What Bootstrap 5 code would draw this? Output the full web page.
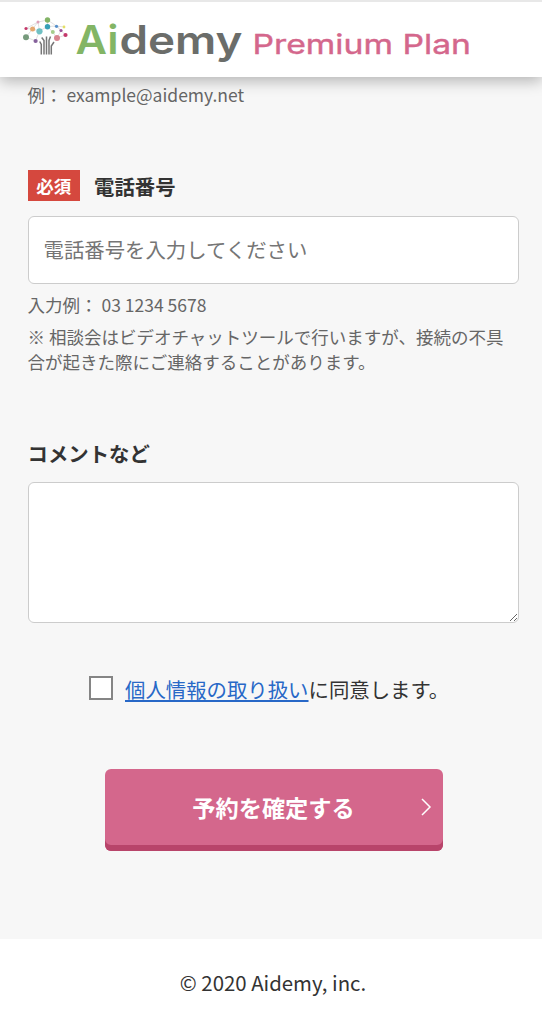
<!DOCTYPE html>
<html lang="ja">
<head>
<meta charset="utf-8">
<meta name="viewport" content="width=device-width, initial-scale=1">
<title>Aidemy Premium Plan</title>
<link href="https://cdn.jsdelivr.net/npm/bootstrap@5.3.0/dist/css/bootstrap.min.css" rel="stylesheet">
<style>
body{font-family:"Noto Sans CJK JP",sans-serif;font-size:20.4px;line-height:30px;color:#333;background:#f7f7f7;overflow:hidden}
.site-header{height:77px;border-top:2px solid #e8e8e8;box-shadow:0 4px 14px rgba(0,0,0,.28);position:relative}
.site-header svg{display:block}
.page-form{padding:5px 23.5px 0 27.5px;height:862px}
.hint{font-size:17.5px;line-height:25px;color:#666}
.required{font-size:17.5px;line-height:31px;width:52.5px;background:#d5483e;color:#fff}
.field-label{margin-left:14px}
.form-control,.form-control:focus{border:1.5px solid #ccc;border-radius:6px;background:#fff;font-size:20.4px;padding:0 15px 2px;color:#333}
.form-control::placeholder{color:#757575}
.phone{height:68px}
.comment{height:141px;resize:vertical}
.agree-check{width:24px;height:24px;border:2px solid #858585;border-radius:0!important;margin:0 0 3px;background:#fff;flex:none}
.agree-link{color:#2868c7;text-decoration-thickness:1.5px;text-underline-offset:2px}
.confirm{width:338px;height:82px;border:0;border-radius:6px;background:#d4678c;box-shadow:inset 0 -6px #b8446a;color:#fff;font-size:23.2px;font-weight:700;position:relative;padding:0 0 5px}
.confirm:hover{background:#d4678c;color:#fff}
.confirm svg{position:absolute;right:11px;top:29px}
</style>
</head>
<body>
<header class="site-header bg-white">
<svg width="542" height="74" viewBox="0 2 542 74" role="img" aria-label="Aidemy Premium Plan">
  <g fill="none" stroke="#d2d2d2" stroke-width=".7">
    <path d="M26 28.500L38 22L47.500 20L56.500 26L64 27M26 37L32.500 29L39.500 31L47.500 26.500L56.500 26L65.500 35L57 38L52.500 32L47.500 26.500V20M26 37L35.500 41L39.500 31L38 22M32.500 29L38 22M26 28.500L32.500 29M56.500 26L61 30.500L57 38"/>
  </g>
  <g fill="none" stroke="#777" stroke-width="1.500">
    <path d="M41.300 54.500V44.500L39.700 41.500M44 54.500V40.500L41.700 37.500M46.500 54.500V36.500M49 54.500V40.500L50.500 36.500M51.300 54.500V46L54 42"/>
  </g>
  <circle cx="47.500" cy="20" r="2.700" fill="#82b366"/><circle cx="38" cy="22" r="1.500" fill="#dfa0b8"/>
  <circle cx="26" cy="28.500" r="1.600" fill="#c4386a"/><circle cx="32.600" cy="29" r="2.500" fill="#e4a86f"/>
  <circle cx="47.500" cy="26.700" r="2.700" fill="#36a0b7"/><circle cx="39.500" cy="31.300" r="3.100" fill="#70c0c3"/>
  <circle cx="56.500" cy="26.300" r="1.600" fill="#5790cc"/><circle cx="64" cy="27" r="1.400" fill="#e5df67"/>
  <circle cx="61" cy="30.500" r="1.600" fill="#985199"/><circle cx="52.800" cy="32" r="2" fill="#a5cd8b"/>
  <circle cx="65.500" cy="35" r="2.100" fill="#c4386a"/><circle cx="57" cy="38" r="3" fill="#d8858f"/>
  <circle cx="26" cy="37.300" r="3" fill="#769a7c"/><circle cx="35.600" cy="41" r="2.100" fill="#85619b"/>
  <g font-family="Inter, sans-serif">
    <text x="75.500" y="54.300" font-size="40" font-weight="600" fill="#83b565" textLength="43" lengthAdjust="spacingAndGlyphs">Ai</text>
    <text x="119.500" y="54.300" font-size="39" font-weight="600" fill="#6b6d6a" textLength="123" lengthAdjust="spacingAndGlyphs">demy</text>
    <text x="252.500" y="54.300" font-size="27.500" font-weight="400" fill="#d4678c" stroke="#d4678c" stroke-width=".4" textLength="218.500" lengthAdjust="spacingAndGlyphs">Premium Plan</text>
  </g>
</svg>
</header>
<main class="page-form">
  <p class="hint mb-0">例： example@aidemy.net</p>
  <section style="padding-top:63px">
    <div class="d-flex align-items-center">
      <span class="required text-center fw-bold">必須</span>
      <label for="phone" class="fw-bold field-label">電話番号</label>
    </div>
    <input id="phone" type="tel" class="form-control phone" style="margin-top:15px" placeholder="電話番号を入力してください">
    <p class="hint mb-0" style="padding-top:8px">入力例： 03 1234 5678</p>
    <p class="hint mb-0" style="padding-top:7px">※ 相談会はビデオチャットツールで行いますが、接続の不具合が起きた際にご連絡することがあります。</p>
  </section>
  <section style="padding-top:64px">
    <label for="comment" class="fw-bold d-block">コメントなど</label>
    <textarea id="comment" class="form-control comment" style="margin-top:14px"></textarea>
  </section>
  <div class="d-flex align-items-center" style="padding:51px 0 0 61.500px">
    <input id="agree" type="checkbox" class="form-check-input agree-check">
    <label for="agree" style="margin-left:12px"><a href="#" class="agree-link">個人情報の取り扱い</a>に同意します。</label>
  </div>
  <div class="d-flex justify-content-center" style="padding:65px 0 0 1px">
    <button type="button" class="btn confirm">予約を確定する
      <svg width="12" height="18" viewBox="0 0 12 18" fill="none" stroke="#fff" stroke-width="1.500"><path d="M2 1L10 9L2 17"/></svg>
    </button>
  </div>
</main>
<footer class="bg-white text-center" style="height:85px;padding:28px 0 0 4px">© 2020 Aidemy, inc.</footer>
<script src="https://cdn.jsdelivr.net/npm/bootstrap@5.3.0/dist/js/bootstrap.bundle.min.js"></script>
</body>
</html>
